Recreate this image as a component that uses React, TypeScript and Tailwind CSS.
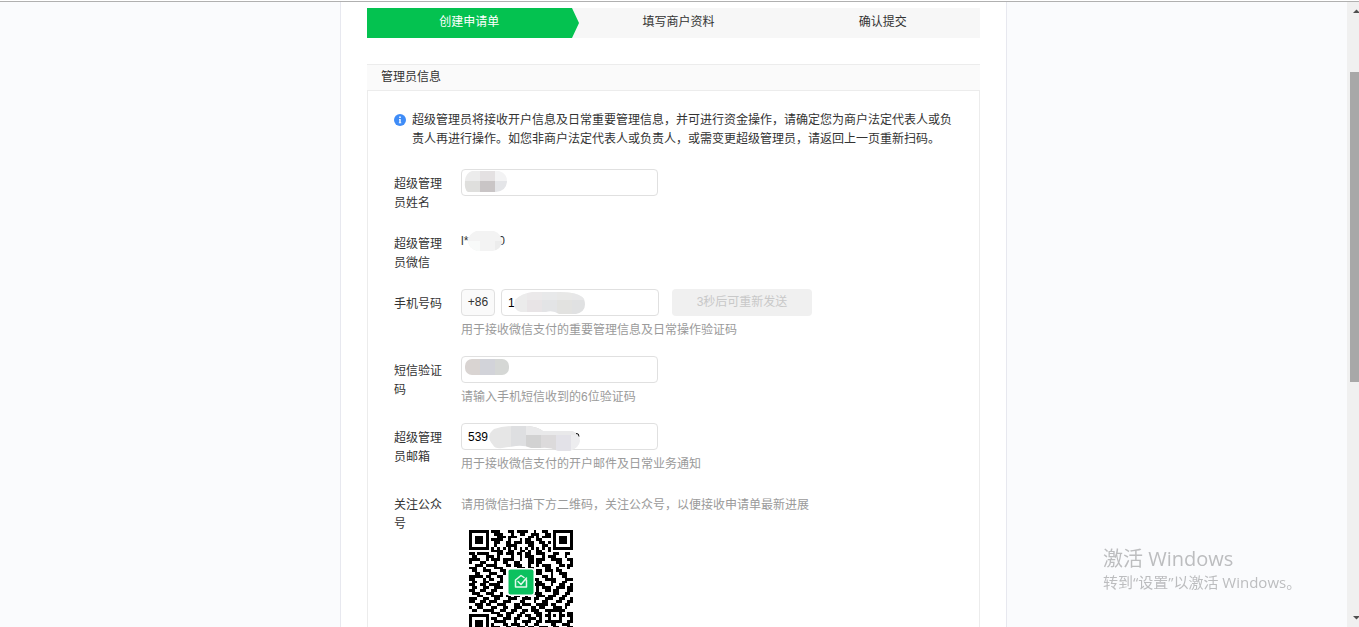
import React from "react";

const steps = ["填写商户资料", "确认提交"];

const qrRows = [
  "1111111011100011011110010011001111111",
  "1000001001110001001100111001101000001",
  "1011101000111011100001101011101011101",
  "1011101011110010001011001100001011101",
  "1011101001100110111011100110101011101",
  "1000001001000111100001100011001000001",
  "1111111010101010101010101010101111111",
  "0000000011110011001101001100100000000",
  "1101111000110111011011001110001100110",
  "0110001110100001001011100010111000100",
  "1111001011101111001001101110011110011",
  "1000110001001100110001101100000110001",
  "0011101111000110111001001011100011011",
  "1110010001110000011101100001100100010",
  "0110011100011000000000001101110110000",
  "0011000111001000000000001100010011100",
  "1111101100110000000000000011010001100",
  "1100010110010000000000011001111000111",
  "0110011000110000000000001100011001100",
  "1100110111100000000000011110010011001",
  "0110011001110000000000001011100111011",
  "1100110011000000000000001001101100011",
  "0111001110010000000000011100001100110",
  "0001100011110110110010001110111001100",
  "1110011001100011100111011001110011001",
  "1100110111001110001100010011000110011",
  "0011101100111000110111001111011000110",
  "1001100011001100111000110110001110100",
  "0110011110011001100110111001111111000",
  "0000000011100111001100011100100010011",
  "1111111000110110011011001101101011011",
  "1000001011001110110001110100100010001",
  "1011101001111000100111001101111110011",
  "1011101010001101110010011000011001110",
  "1011101011100110011101100111001100011",
  "1000001000110001100111001100111001101",
  "1111111011001110011001110011001110011",
];

const qrPath = qrRows
  .map((row, y) =>
    row
      .split("")
      .map((cell, x) => (cell === "1" ? `M${x} ${y}h1v1h-1z` : ""))
      .join("")
  )
  .join("");

type FieldProps = {
  label: string;
  id?: string;
  help?: string;
  children?: React.ReactNode;
};

const Field = ({ label, id, help, children }: FieldProps) => (
  <div className="flex items-start mb-4">
    <label htmlFor={id} className="w-12 mr-[19px] pt-1.5 shrink-0">
      {label}
    </label>
    <div className="grow">
      {children}
      {help && <p className="mt-[5px] text-[#9a9a9a]">{help}</p>}
    </div>
  </div>
);

type TextInputProps = {
  id: string;
  value?: string;
  width: string;
  children?: React.ReactNode;
};

const TextInput = ({ id, value, width, children }: TextInputProps) => (
  <div className={`relative ${width}`}>
    <input
      id={id}
      type="text"
      defaultValue={value}
      className="block w-full h-[27px] px-1.5 bg-white border border-[#e0e0e0] rounded-sm text-black outline-none focus:border-[#07c160]"
    />
    {children}
  </div>
);

const QrCode = () => (
  <svg viewBox="0 0 104 104" className="block w-[104px] h-[104px]">
    <g transform="scale(2.8108)">
      <path d={qrPath} fill="#000" shapeRendering="crispEdges" />
    </g>
    <rect x="38" y="38" width="28" height="28" rx="3" fill="#fff" />
    <rect x="39.500" y="39.500" width="25" height="25" rx="2" fill="#0bc15f" />
    <path
      d="M57.500 50V57H46.500V50L52 45.500L55 47.500M49 51.500L52 54.500L57.500 48"
      fill="none"
      stroke="#e3f8ec"
      strokeWidth="1.500"
      strokeLinejoin="round"
      strokeLinecap="round"
    />
  </svg>
);

const ScrollBar = () => (
  <div className="flex flex-col w-3 shrink-0 bg-[#f0f0f0]">
    <svg viewBox="0 0 12 17" className="block h-[17px] w-3">
      <path d="M6 11L9.500 7.500L13 11z" fill="#505050" />
    </svg>
    <div className="mt-[53px] ml-[3px] h-[310px] bg-[#a8a8a8]" />
    <svg viewBox="0 0 12 17" className="block mt-auto h-[17px] w-3">
      <path d="M6 6L9.500 9.500L13 6z" fill="#505050" />
    </svg>
  </div>
);

const App = () => {
  return (
    <div
      lang="zh-CN"
      className="flex h-screen overflow-hidden border-t border-white bg-[#fafbfd] font-['Liberation_Sans','Noto_Sans_CJK_SC',sans-serif] text-xs leading-[19px] text-[#333]"
    >
      <div className="flex grow border-t border-[#b0b0b0]">
        <main className="grow overflow-hidden">
          <div className="mx-auto w-full max-w-[667px] min-h-full px-[26px] pt-1.5 bg-white border-x border-[#e7e8ef]">
            {/* ステップ */}
            <ol className="grid grid-cols-3 h-[30px] leading-[28px] text-center bg-[#f7f7f7]">
              <li className="relative bg-[#04c250] text-white">
                创建申请单
                <svg
                  viewBox="0 0 8 30"
                  className="absolute top-0 left-full w-2 h-[30px]"
                >
                  <path d="M0 0H1L8 15L1 30H0z" fill="#04c250" />
                </svg>
              </li>
              {steps.map((step) => (
                <li key={step} className="pl-2.5">
                  {step}
                </li>
              ))}
            </ol>

            <section className="mt-[26px]">
              <h2 className="h-[27px] px-3.5 leading-[25px] bg-[#fafafa] border-y border-[#ececec]">
                管理员信息
              </h2>
              <div className="px-[26px] pt-5 border-x border-[#ececec]">
                <div className="flex items-start mb-5">
                  <svg
                    viewBox="0 0 12 12"
                    className="mt-[3px] mr-1.5 w-3 h-3 shrink-0"
                  >
                    <circle cx="6" cy="6" r="6" fill="#3f8cf7" />
                    <path
                      d="M5.200 2.500h1.600v1.400H5.200zM5 5h1.700v3.500h.6v.8H4.800v-.8h.5V5.700H5z"
                      fill="#fff"
                    />
                  </svg>
                  <p className="max-w-[544px]">
                    超级管理员将接收开户信息及日常重要管理信息，并可进行资金操作，请确定您为商户法定代表人或负责人再进行操作。如您非商户法定代表人或负责人，或需变更超级管理员，请返回上一页重新扫码。
                  </p>
                </div>

                <Field label="超级管理员姓名" id="name">
                  <TextInput id="name" width="w-[197px]">
                    <svg
                      viewBox="0 0 44 22"
                      className="absolute left-[3px] top-0.5 w-11 h-[22px]"
                    >
                      <clipPath id="nameMask">
                        <path d="M8 0H35Q44 3 43 11Q42 20 32 21H4Q0 19 1 9Q2 2 8 0z" />
                      </clipPath>
                      <g clipPath="url(#nameMask)">
                        <path d="M0 0h16v10H0z" fill="#ececec" />
                        <path d="M16 0h15v10H16z" fill="#e4e1e2" />
                        <path d="M31 0h13v10H31z" fill="#f3f3f4" />
                        <path d="M0 10h16v12H0z" fill="#dfdfdd" />
                        <path d="M16 10h15v12H16z" fill="#c9c5c6" />
                        <path d="M31 10h13v12H31z" fill="#e4e5e8" />
                      </g>
                    </svg>
                  </TextInput>
                </Field>

                <Field label="超级管理员微信">
                  <div className="flex items-center pt-0.5">
                    l*
                    <svg
                      viewBox="0 0 34 20"
                      className="relative z-10 w-[34px] h-5"
                    >
                      <clipPath id="wechatMask">
                        <path d="M8 0H26Q34 3 34 11Q33 18 25 20H9Q0 17 0 9Q1 3 8 0z" />
                      </clipPath>
                      <g clipPath="url(#wechatMask)">
                        <path d="M0 0h34v20H0z" fill="#f3f3f3" />
                        <path d="M0 10h12v10H0z" fill="#f8faf9" />
                        <path d="M27 10h7v10h-7z" fill="#ececec" />
                      </g>
                    </svg>
                    <span className="-ml-1">0</span>
                  </div>
                </Field>

                <Field
                  label="手机号码"
                  id="phone"
                  help="用于接收微信支付的重要管理信息及日常操作验证码"
                >
                  <div className="flex">
                    <span className="w-[34px] h-[27px] mr-1.5 leading-[25px] text-center bg-[#fafafa] border border-[#e0e0e0] rounded-sm">
                      +86
                    </span>
                    <TextInput id="phone" value="1" width="w-[158px]">
                      <svg
                        viewBox="0 0 72 22"
                        className="absolute left-3 top-[3px] w-[72px] h-[22px]"
                      >
                        <clipPath id="phoneMask">
                          <path d="M2 8Q9 1 20 0H46Q66 0 71 7Q75 19 63 22H46Q40 18 33 20H8Q-1 18 2 8z" />
                        </clipPath>
                        <g clipPath="url(#phoneMask)">
                          <path d="M0 0h14v22H0z" fill="#ebebeb" />
                          <path d="M14 0h15v22H14z" fill="#e8e4e6" />
                          <path d="M29 0h15v22H29z" fill="#e3e4e6" />
                          <path d="M44 0h15v22H44z" fill="#e2e2e0" />
                          <path d="M59 0h13v22H59z" fill="#e0e1e2" />
                          <path d="M0 0h72v8H0z" fill="#eee" opacity=".5" />
                        </g>
                      </svg>
                    </TextInput>
                    <button
                      type="button"
                      disabled
                      className="w-[140px] h-[27px] ml-[13px] leading-[25px] text-[#c8c8c8] bg-[#f0f0f0] rounded-sm"
                    >
                      3秒后可重新发送
                    </button>
                  </div>
                </Field>

                <Field
                  label="短信验证码"
                  id="code"
                  help="请输入手机短信收到的6位验证码"
                >
                  <TextInput id="code" width="w-[197px]">
                    <svg
                      viewBox="0 0 44 16"
                      className="absolute left-1 top-[3px] w-11 h-4"
                    >
                      <clipPath id="codeMask">
                        <rect width="44" height="16" rx="7" />
                      </clipPath>
                      <g clipPath="url(#codeMask)">
                        <path d="M0 0h15v16H0z" fill="#d9d4d2" />
                        <path d="M15 0h15v16H15z" fill="#d2d3d9" />
                        <path d="M30 0h14v16H30z" fill="#d5d7d5" />
                      </g>
                    </svg>
                  </TextInput>
                </Field>

                <Field
                  label="超级管理员邮箱"
                  id="email"
                  help="用于接收微信支付的开户邮件及日常业务通知"
                >
                  <TextInput id="email" value="539" width="w-[197px]">
                    <svg
                      viewBox="0 0 93 26"
                      className="absolute left-[27px] top-[3px] w-[93px] h-[26px]"
                    >
                      <clipPath id="emailMask">
                        <path d="M6 3Q14 0 25 0H40Q50 1 55 5H84Q92 7 92 15Q91 22 82 25H70Q62 21 53 22H43Q36 19 28 20L14 22Q7 23 5 19Q-3 10 6 3z" />
                      </clipPath>
                      <g clipPath="url(#emailMask)">
                        <path d="M0 0h23v26H0z" fill="#e6e6e6" />
                        <path d="M23 0h15v26H23z" fill="#dedfe1" />
                        <path d="M38 0h15v26H38z" fill="#d2d2d2" />
                        <path d="M53 0h15v26H53z" fill="#dcdadb" />
                        <path d="M68 0h15v26H68z" fill="#e3e2e8" />
                        <path d="M83 0h10v26H83z" fill="#ededef" />
                        <path d="M38 0h55v9H38z" fill="#e9e9ea" />
                      </g>
                      <path
                        d="M88 7.500Q91 7 91 10.500"
                        fill="none"
                        stroke="#111"
                        strokeWidth="1"
                      />
                    </svg>
                  </TextInput>
                </Field>

                <Field label="关注公众号">
                  <p className="pt-1.5 text-[#9a9a9a]">
                    请用微信扫描下方二维码，关注公众号，以便接收申请单最新进展
                  </p>
                  <div className="mt-[15px] ml-2">
                    <QrCode />
                  </div>
                </Field>
              </div>
            </section>
          </div>
        </main>
        <ScrollBar />
      </div>

      {/* 透かし */}
      <div className="fixed right-[60px] bottom-[34px] w-[196px] font-['Open_Sans','Noto_Sans_CJK_SC',sans-serif] text-[#bcbdbf] pointer-events-none whitespace-nowrap">
        <p className="text-xl leading-[24px]">激活 Windows</p>
        <p className="text-[15px] leading-[22px]">
          转到“设置”以激活 Windows。
        </p>
      </div>
    </div>
  );
};

export default App;
